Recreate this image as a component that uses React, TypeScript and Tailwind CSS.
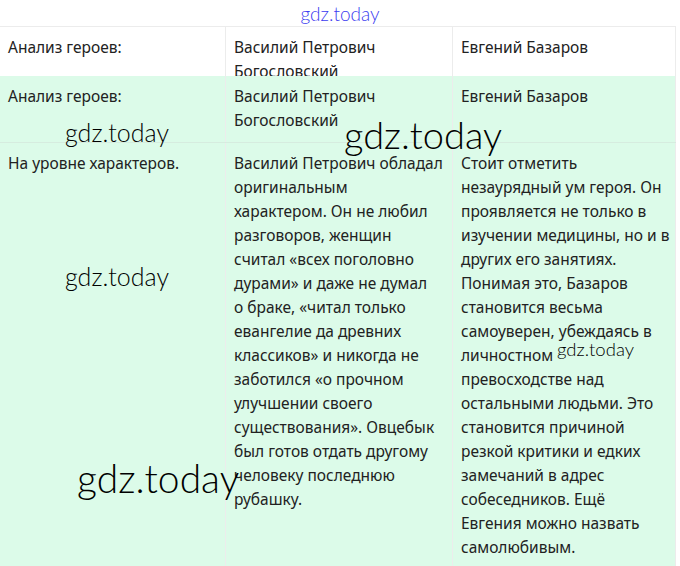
import React from "react";

const COL2 = [
  "Василий Петрович обладал",
  "оригинальным",
  "характером. Он не любил",
  "разговоров, женщин",
  "считал «всех поголовно",
  "дурами» и даже не думал",
  "о браке, «читал только",
  "евангелие да древних",
  "классиков» и никогда не",
  "заботился «о прочном",
  "улучшении своего",
  "существования». Овцебык",
  "был готов отдать другому",
  "человеку последнюю",
  "рубашку.",
];

const COL3 = [
  "Стоит отметить",
  "незаурядный ум героя. Он",
  "проявляется не только в",
  "изучении медицины, но и в",
  "других его занятиях.",
  "Понимая это, Базаров",
  "становится весьма",
  "самоуверен, убеждаясь в",
  "личностном",
  "превосходстве над",
  "остальными людьми. Это",
  "становится причиной",
  "резкой критики и едких",
  "замечаний в адрес",
  "собеседников. Ещё",
  "Евгения можно назвать",
  "самолюбивым.",
];

function Lines({ lines }: { lines: string[] }) {
  return (
    <>
      {lines.map((l, i) => (
        <div key={i} className="whitespace-nowrap">
          {l}
        </div>
      ))}
    </>
  );
}

// watermark overlay
function Mark({ className }: { className: string }) {
  return (
    <span
      className={`pointer-events-none absolute whitespace-nowrap font-light leading-none text-black ${className}`}
      style={{ fontFamily: "Lato, 'Noto Sans', sans-serif" }}
    >
      gdz.today
    </span>
  );
}

export default function App() {
  const cell = "border-r border-[#ececec] px-2 py-2";
  return (
    <div
      className="relative h-[566px] w-[680px] overflow-hidden bg-white text-[15.5px] leading-6 text-[#222]"
      style={{ fontFamily: "'Noto Sans', sans-serif" }}
    >
      <div className="flex h-[26px] items-center justify-center">
        <span
          className="text-[19px] font-light leading-none text-[#3b3bf0]"
          style={{ fontFamily: "Lato, sans-serif" }}
        >
          gdz.today
        </span>
      </div>

      <div className="w-[676px] border-t border-[#ececec]">
        {/* header row, clipped */}
        <div className="grid h-[49px] grid-cols-[226px_227px_223px] overflow-hidden bg-white">
          <div className={cell}>Анализ героев:</div>
          <div className={cell}>
            Василий Петрович
            <br />
            Богословский
          </div>
          <div className={cell}>Евгений Базаров</div>
        </div>

        <div className="bg-[#dcfbe9]">
          <div className="grid grid-cols-[226px_227px_223px] border-b border-[#d6ecdf]">
            <div className={`${cell} border-[#d3eddd] pb-[10px]`}>Анализ героев:</div>
            <div className={`${cell} border-[#d3eddd] pb-[10px]`}>
              Василий Петрович
              <br />
              Богословский
            </div>
            <div className={`${cell} border-[#d3eddd] pb-[10px]`}>Евгений Базаров</div>
          </div>
          <div className="grid h-[440px] grid-cols-[226px_227px_223px]">
            <div className={`${cell} border-[#d3eddd]`}>На уровне характеров.</div>
            <div className={`${cell} border-[#d3eddd]`}>
              <Lines lines={COL2} />
            </div>
            <div className={`${cell} border-[#d3eddd]`}>
              <Lines lines={COL3} />
            </div>
          </div>
        </div>
      </div>

      <Mark className="left-[65px] top-[120px] text-[25px]" />
      <Mark className="left-[344px] top-[115px] text-[38px]" />
      <Mark className="left-[65px] top-[264px] text-[25px]" />
      <Mark className="left-[77px] top-[459px] text-[39px]" />
      <Mark className="left-[557px] top-[340px] text-[18.5px]" />
    </div>
  );
}
